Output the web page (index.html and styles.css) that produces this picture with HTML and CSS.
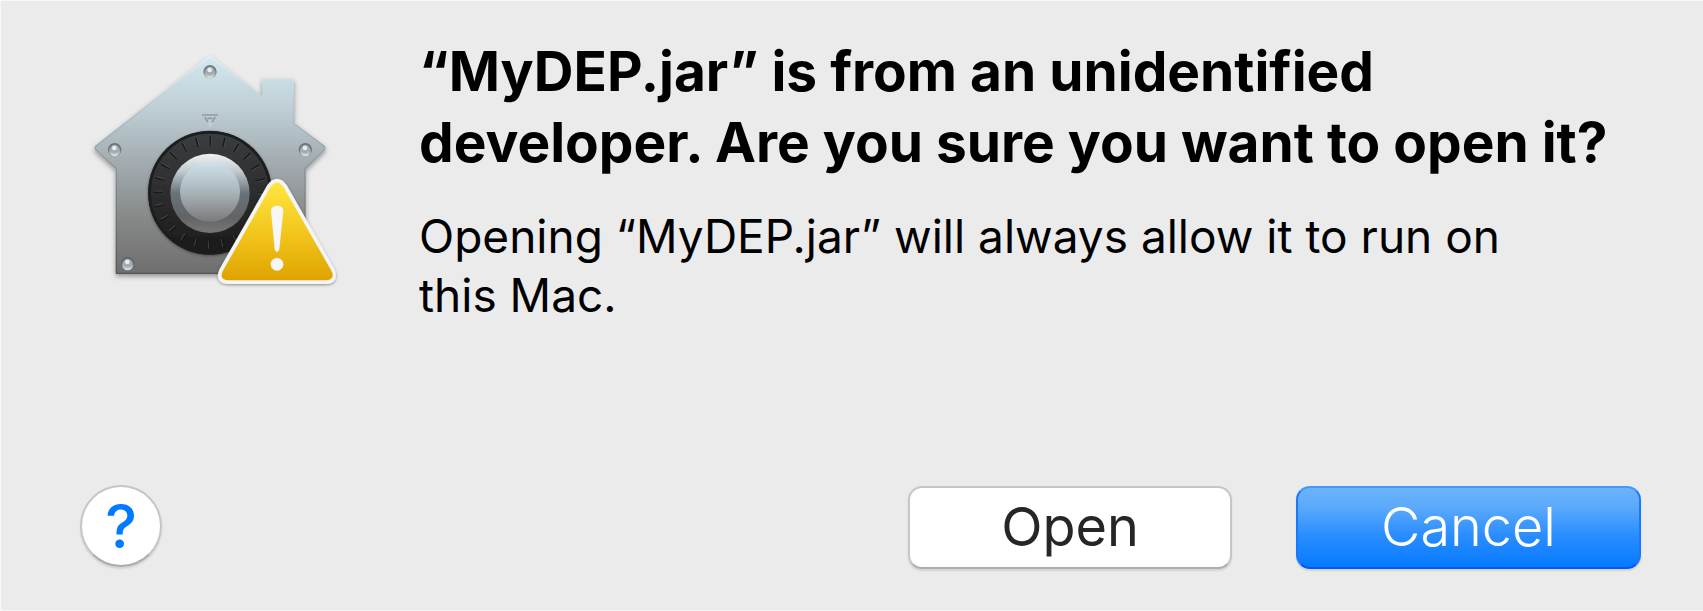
FILE: index.html
```html
<!DOCTYPE html>
<html lang="en">
<head>
<meta charset="utf-8">
<meta name="viewport" content="width=device-width, initial-scale=1">
<title>Open “MyDEP.jar”</title>
<link rel="stylesheet" href="styles.css">
</head>
<body>
<main class="dialog" role="alertdialog" aria-labelledby="title" aria-describedby="message">
  <div class="content">
    <svg class="icon" viewBox="0 0 810 750" aria-hidden="true">
      <defs>
        <linearGradient id="steel" x1="0" y1="0" x2="0" y2="1">
          <stop offset="0" stop-color="#d3e8ef"/>
          <stop offset=".25" stop-color="#bdcdd3"/>
          <stop offset=".5" stop-color="#a1aaae"/>
          <stop offset=".75" stop-color="#868888"/>
          <stop offset="1" stop-color="#6f6e6e"/>
        </linearGradient>
        <linearGradient id="edge" x1="0" y1="0" x2="0" y2="1">
          <stop offset="0" stop-color="#dff3fa"/>
          <stop offset=".5" stop-color="#87959b"/>
          <stop offset="1" stop-color="#555"/>
        </linearGradient>
        <linearGradient id="dial" x1="0" y1="0" x2="0" y2="1">
          <stop offset="0" stop-color="#3a3e40"/>
          <stop offset=".6" stop-color="#2a2a2a"/>
          <stop offset="1" stop-color="#191919"/>
        </linearGradient>
        <linearGradient id="rim" x1="0" y1="0" x2="0" y2="1">
          <stop offset="0" stop-color="#f0f2f3"/>
          <stop offset=".22" stop-color="#c2cacd"/>
          <stop offset=".5" stop-color="#66737a"/>
          <stop offset=".8" stop-color="#626464"/>
          <stop offset="1" stop-color="#777"/>
        </linearGradient>
        <linearGradient id="knob" x1="0" y1="0" x2="0" y2="1">
          <stop offset="0" stop-color="#cfe3ea"/>
          <stop offset=".5" stop-color="#aab5ba"/>
          <stop offset="1" stop-color="#7c7a7a"/>
        </linearGradient>
        <linearGradient id="screw" x1="0" y1="0" x2="0" y2="1">
          <stop offset="0" stop-color="#7b8387"/>
          <stop offset=".55" stop-color="#a3abae"/>
          <stop offset="1" stop-color="#e2e8ea"/>
        </linearGradient>
        <linearGradient id="yellow" x1="0" y1="0" x2="0" y2="1">
          <stop offset="0" stop-color="#ffe640"/>
          <stop offset=".5" stop-color="#f2c71e"/>
          <stop offset="1" stop-color="#dfa300"/>
        </linearGradient>
        <filter id="shadow" x="-10%" y="-10%" width="120%" height="125%">
          <feDropShadow dx="0" dy="7" stdDeviation="8" flood-color="#000" flood-opacity=".38"/>
        </filter>
        <filter id="soft" x="-10%" y="-10%" width="120%" height="125%">
          <feDropShadow dx="0" dy="3" stdDeviation="4" flood-color="#000" flood-opacity=".4"/>
        </filter>
        <g id="bolt">
          <circle r="20" fill="#566064" opacity=".8"/>
          <circle cy="3" r="17" fill="url(#screw)"/>
          <circle cy="-2" r="13" fill="#a3acb0"/>
          <circle cx="-1" cy="-5" r="7" fill="#e6eef1"/>
        </g>
      </defs>
      <path d="M384 39Q390 35 396 39L548 156V104H640V234L732 303Q737 309 732 315L675 371V685H109V371L48 315Q43 309 48 303Z" fill="url(#steel)" stroke="url(#edge)" stroke-width="4" stroke-linejoin="round" filter="url(#shadow)"/>
      <use href="#bolt" x="390" y="80"/>
      <use href="#bolt" x="104" y="314"/>
      <use href="#bolt" x="676" y="314"/>
      <use href="#bolt" x="143" y="656"/>
      <path d="M366 210H414L390 249Z" fill="#c3cdd1"/>
      <path d="M366 210H414M374 216L384 232M406 216L396 232M382 220H398" fill="none" stroke="#8f9a9f" stroke-width="5"/>
      <circle cx="390" cy="443" r="186" fill="url(#dial)" filter="url(#soft)"/>
      <circle cx="390" cy="443" r="181" fill="none" stroke="#1c1d1e" stroke-width="8"/>
      <g fill="none">
        <circle cx="390" cy="443" r="156" stroke="#171819" stroke-width="28" stroke-dasharray="4 36.84" stroke-dashoffset="2"/>
        <circle cx="390" cy="443" r="156" stroke="#4c5052" stroke-width="24" stroke-dasharray="2 38.84" stroke-dashoffset="-3"/>
      </g>
      <circle cx="390" cy="445" r="119" fill="url(#rim)"/>
      <circle cx="390" cy="440" r="90" fill="url(#knob)"/>
      <path d="M562 420Q591 382 620 420L761 668C777 700 763 717 735 717H447C417 717 404 699 421 668Z" fill="#f5f5f5" filter="url(#soft)"/>
      <path d="M571 427Q591 398 611 427L753 675C766 698 752 706 735 706H447C426 706 419 696 430 675Z" fill="url(#yellow)"/>
      <path d="M573 497C573 477 610 477 610 497L598 612Q596 621 591 621Q586 621 584 612Z" fill="#f7f7f7"/>
      <circle cx="591" cy="658" r="19" fill="#f7f7f7"/>
    </svg>
    <div class="copy">
      <h1 class="title" id="title">“MyDEP.jar” is from an unidentified<br>developer. Are you sure you want to open it?</h1>
      <p class="message" id="message">Opening “MyDEP.jar” will always allow it to run on<br>this Mac.</p>
    </div>
  </div>
  <div class="actions">
    <button class="help" type="button" aria-label="Help">?</button>
    <button class="button open" type="button">Open</button>
    <button class="button cancel" type="button">Cancel</button>
  </div>
</main>
</body>
</html>
```
FILE: styles.css
```css
* {
  box-sizing: border-box;
}

body {
  margin: 0;
  font-family: Inter, "Noto Sans", sans-serif;
  color: #000;
}

.dialog {
  display: flex;
  flex-direction: column;
  justify-content: space-between;
  min-height: 100vh;
  padding: 35px 62px 41px 79px;
  background: #ebebeb;
  border: 1px solid #f8f8f8;
  border-right: 0;
}

.content {
  display: flex;
  gap: 69px;
}

.icon {
  flex: none;
  width: 270px;
  height: 250px;
  margin-top: 9px;
}

.copy {
  flex: 1;
}

.title {
  margin: 0 0 29px;
  font-size: 55px;
  line-height: 71px;
  font-weight: 700;
}

.message {
  margin: 0;
  font-size: 46px;
  line-height: 59px;
}

.actions {
  display: flex;
  align-items: center;
}

.help,
.button {
  padding: 0;
  border: 2px solid #c6c6c6;
  border-bottom-color: #adadad;
  background: #fff;
  font-family: inherit;
  box-shadow: 0 2px 2px rgba(0, 0, 0, 0.1);
}

.help {
  width: 82px;
  height: 82px;
  margin: 0 auto 2px 0;
  border-radius: 50%;
  color: #007aff;
  font-size: 60px;
  font-weight: 500;
  line-height: 76px;
}

.button {
  width: 324px;
  height: 83px;
  border-radius: 14px;
  color: #262626;
  font-size: 54px;
  line-height: 76px;
}

.cancel {
  width: 345px;
  margin-left: 64px;
  border-color: #409bf8 #1a78fa #0058f5;
  background: linear-gradient(#6cb3fa, #5aa9fb 25%, #2a8dff 60%, #067aff);
  color: #fff;
  font-weight: 300;
}
```
